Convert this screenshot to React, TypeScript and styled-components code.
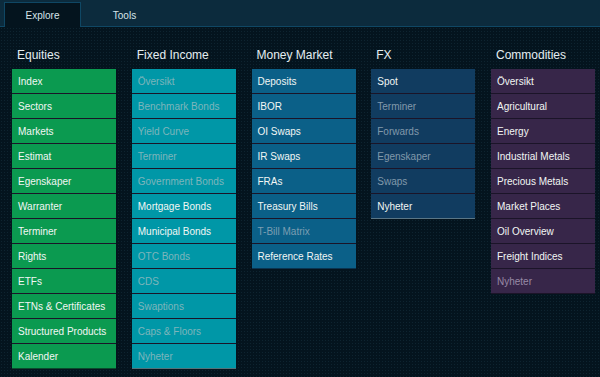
import React from "react";
import styled, { createGlobalStyle } from "styled-components";

const GlobalStyle = createGlobalStyle`
  html, body {
    margin: 0;
    padding: 0;
    background: #04141e;
  }
  body {
    font-family: "Liberation Sans", Arial, sans-serif;
    width: 600px;
    height: 377px;
    overflow: hidden;
  }
`;

type Item = { label: string; disabled?: boolean };
type Column = { title: string; tone: string; items: Item[] };

const tones: Record<string, { bg: string; line: string; dim: string }> = {
  equities: { bg: "#0b9a50", line: "#0a4a2c", dim: "#9cc8ae" },
  fixed: { bg: "#0097a7", line: "#527279", dim: "#7db5bb" },
  money: { bg: "#0b6088", line: "#0a3450", dim: "#7b9eb2" },
  fx: { bg: "#113c60", line: "#5a7686", dim: "#8199ab" },
  commodities: { bg: "#372649", line: "#1b1428", dim: "#988aa6" },
};

const columns: Column[] = [
  {
    title: "Equities",
    tone: "equities",
    items: [
      { label: "Index" },
      { label: "Sectors" },
      { label: "Markets" },
      { label: "Estimat" },
      { label: "Egenskaper" },
      { label: "Warranter" },
      { label: "Terminer" },
      { label: "Rights" },
      { label: "ETFs" },
      { label: "ETNs & Certificates" },
      { label: "Structured Products" },
      { label: "Kalender" },
    ],
  },
  {
    title: "Fixed Income",
    tone: "fixed",
    items: [
      { label: "Översikt", disabled: true },
      { label: "Benchmark Bonds", disabled: true },
      { label: "Yield Curve", disabled: true },
      { label: "Terminer", disabled: true },
      { label: "Government Bonds", disabled: true },
      { label: "Mortgage Bonds" },
      { label: "Municipal Bonds" },
      { label: "OTC Bonds", disabled: true },
      { label: "CDS", disabled: true },
      { label: "Swaptions", disabled: true },
      { label: "Caps & Floors", disabled: true },
      { label: "Nyheter", disabled: true },
    ],
  },
  {
    title: "Money Market",
    tone: "money",
    items: [
      { label: "Deposits" },
      { label: "IBOR" },
      { label: "OI Swaps" },
      { label: "IR Swaps" },
      { label: "FRAs" },
      { label: "Treasury Bills" },
      { label: "T-Bill Matrix", disabled: true },
      { label: "Reference Rates" },
    ],
  },
  {
    title: "FX",
    tone: "fx",
    items: [
      { label: "Spot" },
      { label: "Terminer", disabled: true },
      { label: "Forwards", disabled: true },
      { label: "Egenskaper", disabled: true },
      { label: "Swaps", disabled: true },
      { label: "Nyheter" },
    ],
  },
  {
    title: "Commodities",
    tone: "commodities",
    items: [
      { label: "Översikt" },
      { label: "Agricultural" },
      { label: "Energy" },
      { label: "Industrial Metals" },
      { label: "Precious Metals" },
      { label: "Market Places" },
      { label: "Oil Overview" },
      { label: "Freight Indices" },
      { label: "Nyheter", disabled: true },
    ],
  },
];

const Page = styled.div`
  width: 600px;
  height: 377px;
  background-color: #04141e;
  background-image: radial-gradient(rgba(60, 110, 130, 0.18) 0.6px, transparent 0.8px);
  background-size: 3px 3px;
`;

const TabBar = styled.div`
  height: 26px;
  display: flex;
  align-items: flex-end;
  gap: 5px;
  padding-left: 4px;
  background: #0c2b3d;
  border-bottom: 1px solid #0f4764;
`;

const Tab = styled.div<{ active?: boolean }>`
  width: 77px;
  display: flex;
  align-items: center;
  justify-content: center;
  box-sizing: border-box;
  margin-bottom: -1px;
  font-size: 10px;
  color: #d6e4ea;
  background: ${(p) => (p.active ? "#04141e" : "transparent")};
  border: 1px solid ${(p) => (p.active ? "#0f4764" : "transparent")};
  border-bottom: none;
  height: ${(p) => (p.active ? "25px" : "24px")};
`;

const Columns = styled.div`
  display: grid;
  grid-template-columns: repeat(5, 104px);
  column-gap: 15.75px;
  padding: 20px 0 0 12px;
  align-items: start;
`;

const Col = styled.div`
  display: flex;
  flex-direction: column;
`;

const Heading = styled.div`
  font-size: 12px;
  line-height: 16px;
  color: #e4eef2;
  padding-left: 5px;
  margin-bottom: 6px;
`;

const List = styled.div<{ $bg: string; $line: string }>`
  display: flex;
  flex-direction: column;
  background: ${(p) => p.$bg};
  border-bottom: 1px solid ${(p) => p.$line};
`;

const Row = styled.div<{ $line: string; $dim: string; $disabled?: boolean }>`
  height: 24px;
  display: flex;
  align-items: center;
  padding-left: 6px;
  font-size: 10px;
  color: ${(p) => (p.$disabled ? p.$dim : "#f2f6f4")};
  & + & {
    border-top: 1px solid ${(p) => p.$line};
  }
`;

export default function App() {
  return (
    <Page>
      <GlobalStyle />
      <TabBar>
        <Tab active>Explore</Tab>
        <Tab>Tools</Tab>
      </TabBar>
      <Columns>
        {columns.map((col) => {
          const t = tones[col.tone];
          return (
            <Col key={col.title}>
              <Heading>{col.title}</Heading>
              <List $bg={t.bg} $line={t.line}>
                {col.items.map((item, i) => (
                  <Row key={i} $line={t.line} $dim={t.dim} $disabled={item.disabled}>
                    {item.label}
                  </Row>
                ))}
              </List>
            </Col>
          );
        })}
      </Columns>
    </Page>
  );
}
